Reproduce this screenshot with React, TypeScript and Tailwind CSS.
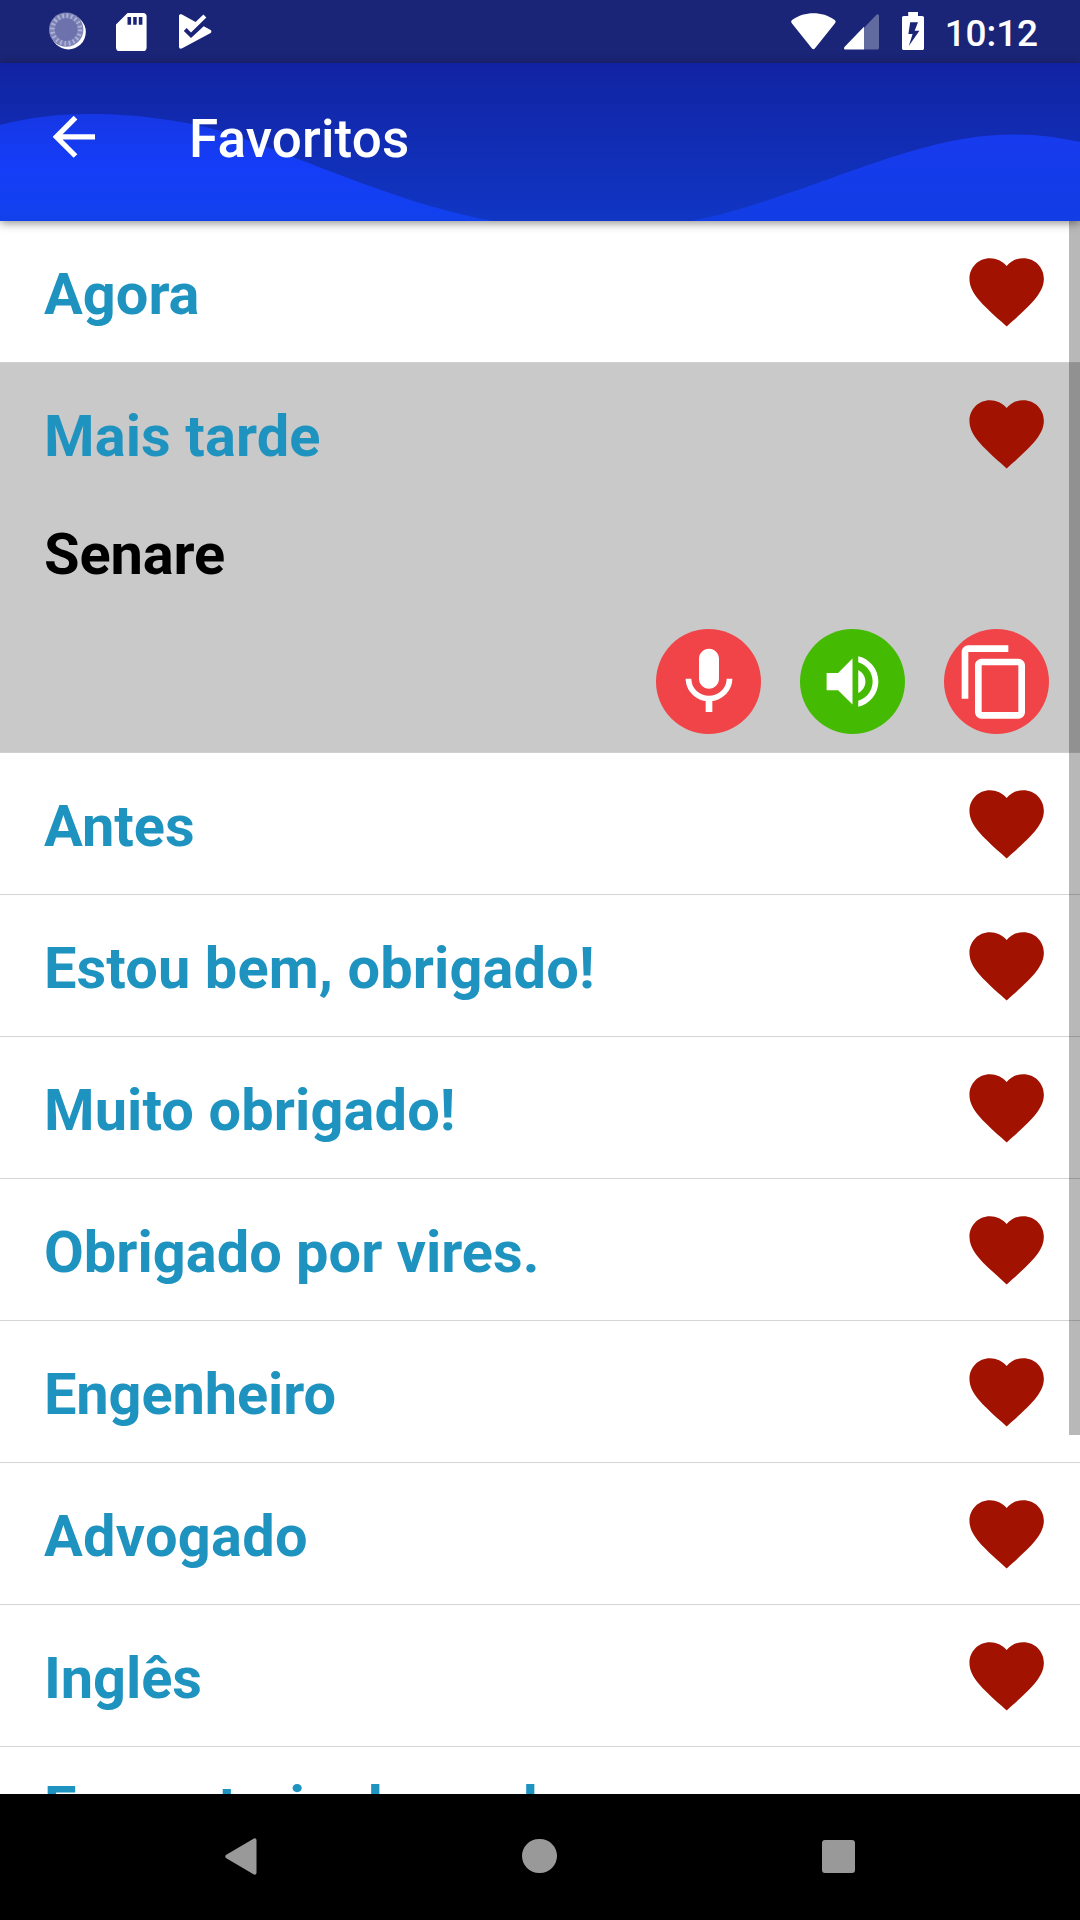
import React from 'react';

type Entry = { text: string; tracking?: string };

const phrases: Entry[] = [
  { text: 'Antes' },
  { text: 'Estou bem, obrigado!', tracking: 'tracking-[0.1px]' },
  { text: 'Muito obrigado!', tracking: 'tracking-[0.1px]' },
  { text: 'Obrigado por vires.' },
  { text: 'Engenheiro', tracking: 'tracking-[-0.12px]' },
  { text: 'Advogado', tracking: 'tracking-[0.25px]' },
  { text: 'Inglês', tracking: 'tracking-[-0.1px]' },
];

function Heart() {
  return (
    <svg viewBox="0 0 24 24" className="mt-[25.6px] size-[89.3px] shrink-0 fill-[#a11200]">
      <path d="M12 21.35l-1.45-1.32C5.4 15.36 2 12.28 2 8.5 2 5.42 4.42 3 7.5 3c1.74 0 3.41.81 4.5 2.09C13.09 3.81 14.76 3 16.5 3 19.58 3 22 5.42 22 8.5c0 3.78-3.4 6.86-8.55 11.54L12 21.35z" />
    </svg>
  );
}

function Phrase({ text, tracking = '' }: Entry) {
  return (
    <div className="flex h-[141px] items-start justify-between pl-11 pr-[28.8px]">
      <span className={`mt-[39px] whitespace-nowrap text-[57.75px] leading-[68px] font-bold text-[#1f93bf] ${tracking}`}>{text}</span>
      <Heart />
    </div>
  );
}

function StatusBar() {
  return (
    <div className="flex h-[63px] items-start justify-between bg-[#1b2577]">
      <div className="flex pl-[49px]">
        <svg viewBox="0 0 38 40" className="mt-3 h-10 w-[38px]">
          <circle cx="19.4" cy="20" r="17.4" fill="#fff" />
          <circle cx="17.2" cy="17.6" r="17.2" fill="#7f84b8" />
          <circle cx="17.2" cy="17.6" r="13.8" fill="none" stroke="#c3c6e0" strokeWidth="4.6" strokeDasharray="1.7 2.63" opacity=".7" />
          <circle cx="17.2" cy="17.6" r="11.3" fill="#6d72ad" />
        </svg>
        <svg viewBox="0 0 31 38" className="ml-[29px] mt-[12.5px] h-[38px] w-[31px]">
          <path fill="#fff" fillRule="evenodd" d="M11.5 0H27a3.6 3.6 0 0 1 3.6 3.6v30.8A3.6 3.6 0 0 1 27 38H3.6A3.6 3.6 0 0 1 0 34.4V11.5zM11.5 4v7.7h3.6V4zM17.2 4v7.7h3.5V4zM22.8 4v7.7h3.6V4z" />
        </svg>
        <svg viewBox="0 0 33 35" className="ml-8 mt-[14px] h-[35px] w-[33px]">
          <path fill="#fff" d="M0 2C0 .3 1.6-.2 3 .6L16.6 8 24.4.4l2.9 3L12 18.6l-4.400-4.500-2.800 2.800L12 24 24.700 12.300l6.500 3.500c1.600.9 1.600 2.500 0 3.400L3.200 34.300C1.500 35.200 0 34.500 0 32.800z" />
        </svg>
      </div>
      <div className="flex pr-[42px]">
        <svg viewBox="0 0 45 37" className="mt-[12.6px] h-[37px] w-[45px]">
          <path fill="#fff" d="M.8 10.2C-.3 8.7 0 7.8 1.4 6.8 7.5 2.3 14.8.2 22.4.2s14.9 2.1 21 6.6c1.4 1 1.7 1.9.6 3.4L24 35.2c-1 1.3-2.2 1.3-3.2 0z" />
        </svg>
        <svg viewBox="0 0 35 36" className="ml-2 mt-[14.4px] h-9 w-[35px]">
          <path fill="#626ba0" d="M20 13.7 32 1.2c1.6-1.7 3-1 3 1v31.6c0 1.2-.6 1.8-1.8 1.8H20z" />
          <path fill="#fff" d="M20 12.8v22.8H1.5c-1.6 0-2-1.6-.8-2.8z" />
        </svg>
        <svg viewBox="0 0 22 38" className="ml-[23px] mt-3 h-[38px] w-[22px]">
          <path fill="#fff" fillRule="evenodd" d="M6.2 0H16v4h4.2C21.3 4 22 4.7 22 5.8v30.4c0 1.1-.7 1.8-1.8 1.8H1.8C.7 38 0 37.3 0 36.2V5.8C0 4.7.7 4 1.8 4h4.4zM8.2 10.2 6.4 22h4.2L6.8 34l10.600-15.200H12.600L16 10.200z" />
        </svg>
        <span className="flex w-[114px] justify-end">
          <span className="mt-[12px] text-[37px] leading-[44px] font-medium tracking-[-0.1px] text-white">10:12</span>
        </span>
      </div>
    </div>
  );
}

function AppBar() {
  return (
    <header className="relative z-20 flex h-[158px] items-start bg-linear-to-b from-[#1123a3] to-[#1036c4] shadow-[0_2px_9px_rgba(0,0,0,0.45)]">
      <svg viewBox="0 0 1080 158" className="absolute inset-0 h-[158px] w-[1080px]" aria-hidden="true">
        <defs>
          <linearGradient id="wave-left" x1="0" y1="50" x2="0" y2="158" gradientUnits="userSpaceOnUse">
            <stop offset="0" stopColor="#1637e4" />
            <stop offset=".5" stopColor="#153df8" />
            <stop offset="1" stopColor="#1141ec" />
          </linearGradient>
          <linearGradient id="wave-right" x1="0" y1="70" x2="0" y2="158" gradientUnits="userSpaceOnUse">
            <stop offset="0" stopColor="#173aee" />
            <stop offset="1" stopColor="#123de4" />
          </linearGradient>
        </defs>
        <path fill="url(#wave-left)" d="M0 62C30 54 60 51 90 51 140 51 180 58 210 65 280 84 390 140 493 158H0z" />
        <path fill="url(#wave-right)" d="M691 158C760 145 850 106 905 90 980 67 1030 68 1080 79V158z" />
      </svg>
      <svg viewBox="0 0 42 42" className="relative ml-[53px] mt-[53px] size-[42px]">
        <path d="M42 20.8H4M22.5 1.6 3.3 20.8 22.5 40" fill="none" stroke="#fff" strokeWidth="5.2" />
      </svg>
      <h1 className="relative ml-[94px] mt-[45px] text-[53px] leading-[62px] font-medium tracking-[0.15px] text-white">Favoritos</h1>
    </header>
  );
}

function Actions() {
  return (
    <div className="mt-[41px] flex justify-end gap-[39px] pr-[31px]">
      <button className="flex size-[105px] items-center justify-center rounded-full bg-[#f04448]">
        <svg viewBox="0 0 24 24" className="size-20 fill-white">
          <path d="M12 14c1.66 0 2.99-1.34 2.99-3L15 5c0-1.66-1.34-3-3-3S9 3.34 9 5v6c0 1.66 1.34 3 3 3zm5.3-3c0 3-2.54 5.1-5.3 5.1S6.7 14 6.7 11H5c0 3.41 2.72 6.23 6 6.72V21h2v-3.28c3.28-.48 6-3.3 6-6.72h-1.7z" />
        </svg>
      </button>
      <button className="flex size-[105px] items-center justify-center rounded-full bg-[#45ba03]">
        <svg viewBox="0 0 24 24" className="size-[69px] fill-white">
          <path d="M3 9v6h4l5 5V4L7 9H3zm13.5 3c0-1.77-1.02-3.29-2.5-4.03v8.05c1.48-.73 2.5-2.25 2.5-4.02zM14 3.23v2.06c2.89.86 5 3.54 5 6.71s-2.11 5.85-5 6.71v2.06c4.01-.91 7-4.49 7-8.77s-2.99-7.86-7-8.77z" />
        </svg>
      </button>
      <button className="flex size-[105px] items-center justify-center rounded-full bg-[#f04448]">
        <svg viewBox="0 0 24 24" className="mr-1 size-20 fill-white">
          <path d="M16 1H4c-1.1 0-2 .9-2 2v14h2V3h12V1zm3 4H8c-1.1 0-2 .9-2 2v14c0 1.1.9 2 2 2h11c1.1 0 2-.9 2-2V7c0-1.1-.9-2-2-2zm0 16H8V7h11v14z" />
        </svg>
      </button>
    </div>
  );
}

function NavBar() {
  return (
    <nav className="flex h-[126px] items-start bg-black pl-[225px] pt-[44px]">
      <svg viewBox="0 0 32 37" className="h-[37px] w-8 fill-[#999]">
        <path d="M28.5.7c1.5-1 3-.2 3 1.5v32.6c0 1.7-1.5 2.5-3 1.5L1.3 20.2c-1.400-.9-1.400-2.500 0-3.400z" />
      </svg>
      <div className="ml-[265px] mt-[.5px] size-[34.5px] rounded-full bg-[#999]" />
      <div className="ml-[265px] mt-[2px] size-[33px] rounded-[3px] bg-[#999]" />
    </nav>
  );
}

export default function App() {
  return (
    <div className="flex h-[1920px] w-[1080px] flex-col overflow-hidden bg-white font-['Roboto',sans-serif]">
      <StatusBar />
      <AppBar />
      <main className="relative h-[1573px] overflow-hidden">
        <div className="border-b border-[#d0d0d0]">
          <Phrase text="Agora" />
        </div>
        <section className="h-[390px] border-b border-[#d0d0d0] bg-[#c9c9c9]">
          <Phrase text="Mais tarde" tracking="tracking-[0.1px]" />
          <p className="mt-[16px] pl-11 text-[57.75px] leading-[68px] font-bold tracking-[-0.15px] text-black">Senare</p>
          <Actions />
        </section>
        {phrases.map((entry) => (
          <div key={entry.text} className="border-b border-[#d4d4d4]">
            <Phrase {...entry} />
          </div>
        ))}
        <p className="mt-[26px] w-[900px] pl-11 text-[57.75px] leading-[68px] font-bold text-[#1f93bf]">Eu gostaria de conhecer</p>
        <div className="absolute right-0 top-0 h-[1214px] w-[11px] bg-black/28" />
      </main>
      <NavBar />
    </div>
  );
}
